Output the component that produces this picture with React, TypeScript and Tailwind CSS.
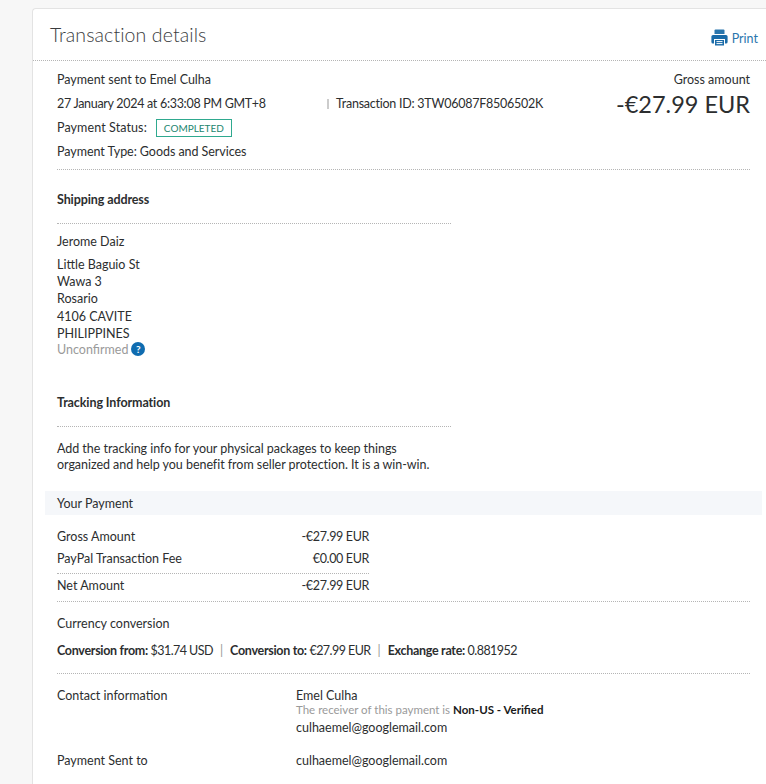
const Dotted = ({ className = "" }: { className?: string }) => (
  <div className={`border-t border-dotted border-[#b5b5b5] ${className}`} />
);

function PrintIcon() {
  return (
    <svg width="17" height="17" viewBox="0 0 17 17" className="shrink-0">
      <path d="M3.500 1.500 a1 1 0 0 1 1-1 h8 a1 1 0 0 1 1 1 V5 h-10 z" fill="#2a76ad" />
      <path d="M2 6 h13 a1.600 1.600 0 0 1 1.600 1.600 v5.400 a1.600 1.600 0 0 1-1.600 1.600 h-1 V10 H3 v4.600 H2 a1.600 1.600 0 0 1-1.600-1.600 V7.600 A1.600 1.600 0 0 1 2 6 z" fill="#1a6ba8" />
      <path d="M4 11 h9 v5.500 h-9 z" fill="#1a6ba8" />
      <path d="M5.500 12.600 h6 M5.500 14.600 h6" stroke="#ffffff" strokeWidth="1" />
    </svg>
  );
}

function Row({ label, value, className = "" }: { label: string; value: string; className?: string }) {
  return (
    <div className={`flex w-[312px] items-center justify-between pt-[2px] ${className}`}>
      <span>{label}</span>
      <span className="tracking-[-0.35px]">{value}</span>
    </div>
  );
}

export default function App() {
  return (
    <div className="h-[784px] overflow-hidden bg-[#f7f7f7] pt-2 pl-8 font-['Lato','Open_Sans',sans-serif] text-[12.5px] text-[#2c2e2f]">
      <div className="h-[790px] w-[734px] rounded-tl-sm border-t border-l border-[#e3e3e3] bg-white">
        <div className="flex h-[51px] items-center justify-between pr-2 pb-px pl-[17px]">
          <h1 className="pt-[2px] text-[19.5px] font-light tracking-[0.1px] text-[#3a3c3e]">Transaction details</h1>
          <a className="mt-[7px] flex items-center gap-1 text-[#2a76ad]">
            <PrintIcon />
            <span className="mt-[4px]">Print</span>
          </a>
        </div>
        <Dotted />

        <div className="pr-4 pl-6">
          <div className="flex h-[108px] justify-between pt-[7px]">
            <div>
              <div className="flex h-6 items-center">Payment sent to Emel Culha</div>
              <div className="flex h-6 items-center">
                <span className="w-[270px] tracking-[-0.3px]">27 January 2024 at 6:33:08 PM GMT+8</span>
                <span className="mr-[7px] h-[10px] w-[2px] bg-[#cccccc]" />
                <span className="tracking-[-0.25px]">Transaction ID: 3TW06087F8506502K</span>
              </div>
              <div className="flex h-6 items-center">
                <span className="tracking-[0.1px]">Payment Status:</span>
                <span className="ml-[9px] flex h-[18px] w-[76px] items-center justify-center border border-[#2fa98f] text-[10px] text-[#23866f]">
                  COMPLETED
                </span>
              </div>
              <div className="flex h-6 items-center tracking-[-0.05px]">Payment Type: Goods and Services</div>
            </div>
            <div className="text-right">
              <div className="flex h-6 items-center justify-end">Gross amount</div>
              <div className="text-[23.5px] leading-6 text-[#2c2e2f]">-€27.99 EUR</div>
            </div>
          </div>
          <Dotted />

          <div className="w-[394px]">
            <div className="flex h-[53px] items-center pt-2 font-bold tracking-[-0.1px]">Shipping address</div>
            <Dotted />
            <div className="flex h-8 items-center pt-[5px]">Jerome Daiz</div>
            <div className="leading-[17.2px]">
              <div>Little Baguio St</div>
              <div>Wawa 3</div>
              <div>Rosario</div>
              <div>4106 CAVITE</div>
              <div>PHILIPPINES</div>
              <div className="-mt-px flex items-center gap-[3px] text-[#9a9a9a]">
                Unconfirmed
                <span className="mb-[2px] flex size-[14px] items-center justify-center rounded-full bg-[#0f6cb0] text-[10px] leading-none font-bold text-white">
                  ?
                </span>
              </div>
            </div>
            <div className="flex h-[61px] items-end pb-[6px] font-bold tracking-[-0.1px]">Tracking Information</div>
            <Dotted className="mt-[7px]" />
            <p className="mt-[14px] w-[400px] leading-4 tracking-[-0.04px] whitespace-nowrap">
              Add the tracking info for your physical packages to keep things
              <br />
              organized and help you benefit from seller protection. It is a win-win.
            </p>
          </div>
        </div>

        <div className="mt-[18px] ml-3 flex h-6 w-[717px] items-center bg-[#f5f7fa] pt-[3px] pl-3">Your Payment</div>

        <div className="pr-4 pl-6">
          <Row className="mt-[10px] h-[22px]" label="Gross Amount" value="-€27.99 EUR" />
          <Row className="h-[22px]" label="PayPal Transaction Fee" value="€0.00 EUR" />
          <Dotted className="mt-[4px] w-[312px]" />
          <Row className="h-[23px]" label="Net Amount" value="-€27.99 EUR" />
          <Dotted className="mt-[4px]" />
          <div className="flex h-[43px] items-center pt-[2px]">Currency conversion</div>
          <div className="flex h-[11px] items-center gap-[7px] pt-[2px] whitespace-nowrap">
            <span className="tracking-[-0.55px]">
              <b className="tracking-[-0.3px]">Conversion from:</b> $31.74 USD
            </span>
            <span className="text-[#999999]">|</span>
            <span className="tracking-[-0.55px]">
              <b className="tracking-[-0.3px]">Conversion to:</b> €27.99 EUR
            </span>
            <span className="text-[#999999]">|</span>
            <span className="tracking-[-0.55px]">
              <b className="tracking-[-0.3px]">Exchange rate:</b> 0.881952
            </span>
          </div>
          <Dotted className="mt-[17px]" />
          <div className="mt-[14px] flex leading-4">
            <span className="w-[239px]">Contact information</span>
            <div>
              <div>Emel Culha</div>
              <div className="-mt-[2px] text-[11.5px] leading-[15px] text-[#9a9a9a]">
                The receiver of this payment is <b className="text-[#1a1a1a]">Non-US - Verified</b>
              </div>
              <div className="mt-[3px]">culhaemel@googlemail.com</div>
            </div>
          </div>
          <div className="mt-[17px] flex leading-4">
            <span className="w-[239px]">Payment Sent to</span>
            <span>culhaemel@googlemail.com</span>
          </div>
          <Dotted className="mt-[15px]" />
        </div>
      </div>
    </div>
  );
}
